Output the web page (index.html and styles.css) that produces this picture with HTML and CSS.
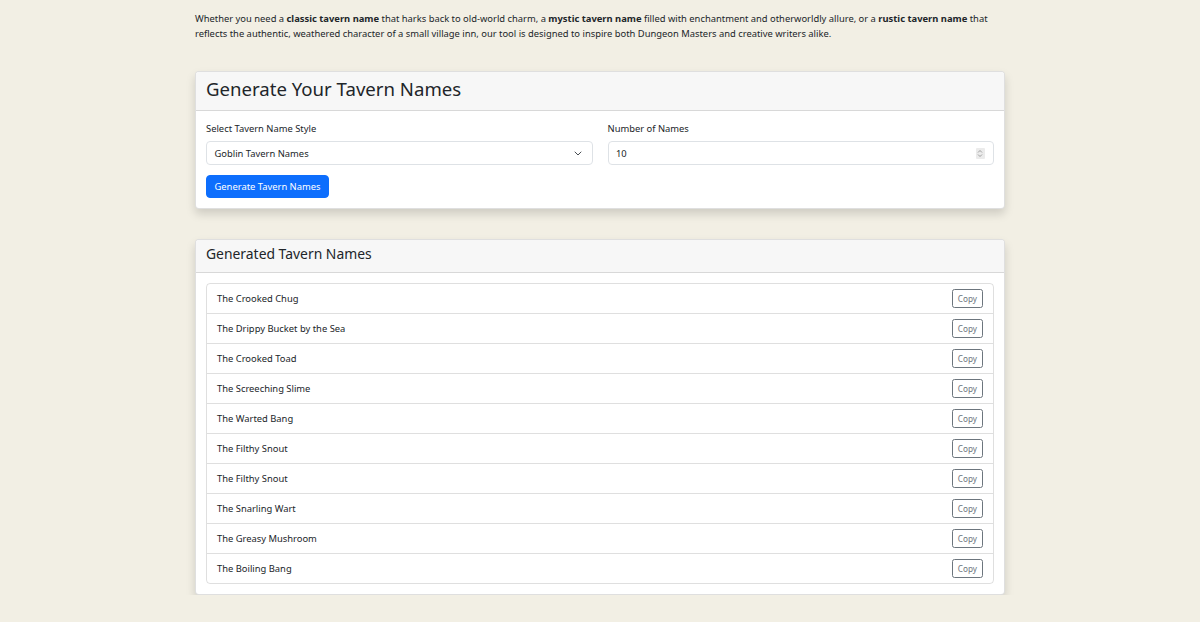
FILE: index.html
```html
<!DOCTYPE html>
<html lang="en">
<head>
<meta charset="utf-8">
<title>Tavern Name Generator</title>
<link rel="stylesheet" href="styles.css">
</head>
<body>
<main class="container">
  <p class="intro">Whether you need a <strong>classic tavern name</strong> that harks back to old-world charm, a <strong>mystic tavern name</strong> filled with enchantment and otherworldly allure, or a <strong>rustic tavern name</strong> that reflects the authentic, weathered character of a small village inn, our tool is designed to inspire both Dungeon Masters and creative writers alike.</p>

  <section class="card card-form">
    <div class="card-header"><h2 class="title-lg">Generate Your Tavern Names</h2></div>
    <div class="card-body">
      <div class="row">
        <div class="col">
          <label class="form-label">Select Tavern Name Style</label>
          <div class="form-control select">
            <span>Goblin Tavern Names</span>
            <svg class="chev" width="8" height="5" viewBox="0 0 16 10"><path d="M2 2l6 6 6-6" fill="none" stroke="#343a40" stroke-width="1.8" stroke-linecap="round" stroke-linejoin="round"/></svg>
          </div>
        </div>
        <div class="col">
          <label class="form-label">Number of Names</label>
          <div class="form-control number">
            <span>10</span>
            <span class="spin"><svg width="6" height="9" viewBox="0 0 6 9"><path d="M1 3.5L3 1.5 5 3.5M1 5.5L3 7.5 5 5.5" fill="none" stroke="#8a8a8a" stroke-width="0.8"/></svg></span>
          </div>
        </div>
      </div>
      <button class="btn btn-primary">Generate Tavern Names</button>
    </div>
  </section>

  <section class="card card-results">
    <div class="card-header"><h4 class="title-md">Generated Tavern Names</h4></div>
    <div class="card-body">
      <ul class="list-group">
        <li class="list-item"><span>The Crooked Chug</span><button class="btn-copy">Copy</button></li>
        <li class="list-item"><span>The Drippy Bucket by the Sea</span><button class="btn-copy">Copy</button></li>
        <li class="list-item"><span>The Crooked Toad</span><button class="btn-copy">Copy</button></li>
        <li class="list-item"><span>The Screeching Slime</span><button class="btn-copy">Copy</button></li>
        <li class="list-item"><span>The Warted Bang</span><button class="btn-copy">Copy</button></li>
        <li class="list-item"><span>The Filthy Snout</span><button class="btn-copy">Copy</button></li>
        <li class="list-item"><span>The Filthy Snout</span><button class="btn-copy">Copy</button></li>
        <li class="list-item"><span>The Snarling Wart</span><button class="btn-copy">Copy</button></li>
        <li class="list-item"><span>The Greasy Mushroom</span><button class="btn-copy">Copy</button></li>
        <li class="list-item"><span>The Boiling Bang</span><button class="btn-copy">Copy</button></li>
      </ul>
    </div>
  </section>
</main>
</body>
</html>
```

FILE: styles.css
```css
* { box-sizing: border-box; }
html, body { margin: 0; padding: 0; }
body {
  background: #f2efe4;
  font-family: "Noto Sans", "Open Sans", sans-serif;
  font-size: 9.4px;
  line-height: 15px;
  color: #212529;
}
.container {
  width: 810px;
  margin: 0 auto;
  padding-top: 11px;
}
.intro { margin: 0 0 30px; }
.intro strong { font-weight: 700; }

.card {
  background: #fff;
  border: 1px solid rgba(0,0,0,.125);
  border-radius: 4px;
  box-shadow: 0 5px 10px rgba(0,0,0,.15);
  overflow: hidden;
}
.card-form { margin-bottom: 30px; }
.card-header {
  background: #f7f7f7;
  border-bottom: 1px solid rgba(0,0,0,.125);
  padding: 5px 10px;
}
.title-lg { margin: 0 0 5px; font-size: 18.6px; line-height: 23px; font-weight: 400; }
.title-md { margin: 0 0 5px; font-size: 13.9px; line-height: 17px; font-weight: 400; }
.card-body { padding: 10px; }

.row { display: flex; gap: 15px; margin-bottom: 10px; }
.col { flex: 1; min-width: 0; }
.form-label { display: block; margin-bottom: 5px; }
.form-control {
  display: flex;
  align-items: center;
  justify-content: space-between;
  height: 24px;
  padding: 0 7.5px;
  border: 1px solid #dee2e6;
  border-radius: 4px;
  background: #fff;
}
.select { padding-right: 10px; }
.spin {
  width: 9px; height: 11px;
  background: #ebebeb;
  display: flex; align-items: center; justify-content: center;
  border-radius: 1px;
  margin-right: 1px;
}
.btn {
  font: inherit;
  height: 23px;
  border: 1px solid transparent;
  border-radius: 4px;
  padding: 0 7.5px;
  line-height: 15px;
}
.btn-primary { background: #0d6efd; color: #fff; border-color: #0d6efd; }

.list-group { list-style: none; margin: 0; padding: 0; border: 1px solid rgba(0,0,0,.125); border-radius: 4px; }
.list-item {
  display: flex;
  align-items: center;
  justify-content: space-between;
  padding: 5px 10px;
  border-top: 1px solid rgba(0,0,0,.125);
  height: 30px;
}
.list-item:first-child { border-top: 0; height: 29px; }
.btn-copy {
  font: inherit;
  font-size: 8.2px;
  line-height: 13px;
  height: 19px;
  padding: 0 5px;
  color: #6c757d;
  background: transparent;
  border: 1px solid #6c757d;
  border-radius: 2.5px;
}
```
